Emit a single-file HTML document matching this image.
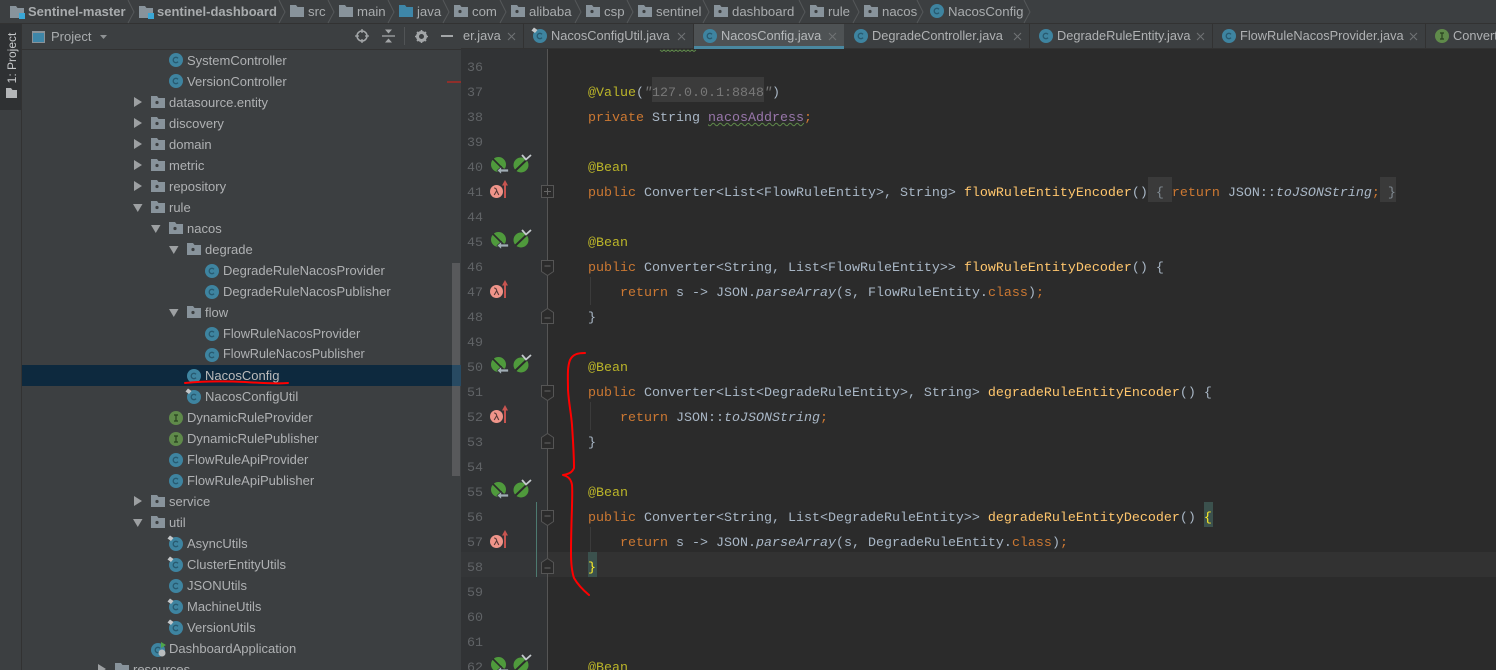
<!DOCTYPE html>
<html><head><meta charset="utf-8"><style>
html,body{margin:0;padding:0;background:#3c3f41}
#p{position:relative;width:1496px;height:670px;overflow:hidden;background:#3c3f41;font-family:"Liberation Sans",sans-serif;font-size:13px;color:#bbb}
#p div,#p span.a,#p svg.i{position:absolute}
.t{white-space:nowrap;line-height:21px;height:21px;color:#afb1b3}
.b{white-space:nowrap;line-height:23px;height:23px;top:0;color:#a9acae;font-size:13.2px}
.tb{white-space:nowrap;line-height:24px;height:24px;top:24px;color:#afb1b3;font-size:12.8px}
.sep{top:24px;width:1px;height:24px;background:#323232}
.l{left:588px;height:25px;line-height:25px;white-space:pre;font-family:"Liberation Mono",monospace;font-size:13.33px;color:#a9b7c6}
.n{left:467px;height:25px;line-height:25px;font-family:"Liberation Mono",monospace;font-size:13.33px;color:#606366}
.k{color:#cc7832}.y{color:#bbb529}.f{color:#ffc66d}.o{color:#9876aa}.it{font-style:italic}
.g{color:#787878}
svg.i{overflow:visible}
</style></head><body><div id="p">
<svg width="0" height="0" style="position:absolute">
<defs>
<g id="c"><circle cx="7" cy="7" r="7" fill="#3e84a0"/><path d="M9 5.300A2.700 2.700 0 1 0 9 8.700" fill="none" stroke="#285a70" stroke-width="1.300"/></g>
<g id="cp"><use href="#c"/><path d="M-1.500 1.500L1-1.500 4.500 1 2 4z" fill="#c4c7c9"/></g>
<g id="ii"><circle cx="7" cy="7" r="7" fill="#5f8a4a"/><path d="M5 4h4M7 4v6M5 10h4" stroke="#28401f" stroke-width="1.200" fill="none"/></g>
<g id="pk"><path d="M0 0h6l1.500 2H14v10H0z" fill="#88939b"/><circle cx="6" cy="6.500" r="1.600" fill="#3c3f41"/></g>
<g id="fo"><path d="M0 0h6l1.500 2H14v10H0z" fill="#88939b"/></g>
<g id="fb"><path d="M0 0h6l1.500 2H14v10H0z" fill="#3e86a8"/></g>
<g id="mod"><path d="M0 0h6l1.500 2H14v10H0z" fill="#88939b"/><rect x="9" y="7" width="6" height="6" fill="#3aa7d6"/></g>
<path id="ar" d="M0 0L8 5L0 10z" fill="#9da0a2"/>
<path id="ad" d="M0 0H9.500L4.750 8z" fill="#9da0a2"/>
<g id="be"><circle cx="7.500" cy="7.500" r="7.500" fill="#4f9a3c"/><path d="M2 2L13 13" stroke="#2b2b2b" stroke-width="1.600"/><path d="M6 13.500L10.500 9.500V12H17.500V15H10.500V17.500z" fill="#a0adb5" stroke="#2f3133" stroke-width=".7"/></g>
<g id="bc"><circle cx="7" cy="8" r="7.500" fill="#4f9a3c"/><path d="M1.500 13.500L13 2.500" stroke="#2b2b2b" stroke-width="2"/><path d="M8-2L12 2.500L17-2" fill="none" stroke="#c3c8cc" stroke-width="1.800"/></g>
<g id="la"><circle cx="6.500" cy="6.500" r="6.500" fill="#f0958a"/><path d="M4 3C6 3 6.300 4 6.800 6L8.800 10M6.500 6L4.200 10" fill="none" stroke="#5a3a38" stroke-width="1.100"/><path d="M15 13V-1" stroke="#c75450" stroke-width="2"/><path d="M12 .5L15-5L18 .5z" fill="#c75450"/></g>
<g id="fp"><rect x=".5" y=".5" width="12" height="12" fill="#2b2b2b" stroke="#555"/><path d="M3 6.500h7M6.500 3v7" stroke="#666"/></g>
<g id="fo1"><path d="M.5.5h12v11l-6 4-6-4z" fill="#2b2b2b" stroke="#555"/><path d="M3.500 6h6" stroke="#666"/></g>
<g id="fc1"><path d="M.5 15.500h12v-11l-6-4-6 4z" fill="#2b2b2b" stroke="#555"/><path d="M3.500 10h6" stroke="#666"/></g>
<path id="xx" d="M0 0L7 7M7 0L0 7" fill="none" stroke="#6f7274" stroke-width="1.100"/>
</defs></svg>

<!-- top bar -->
<div style="left:0;top:0;width:1496px;height:23px;background:#3c3f41"></div>
<div style="left:0;top:23px;width:1496px;height:1px;background:#323232"></div>
<svg class="i" style="left:10px;top:6px" width="16" height="14"><use href="#mod"/></svg><div class="b" style="left:28px;font-weight:bold;font-size:13px">Sentinel-master</div>
<svg class="i" style="left:139px;top:6px" width="16" height="14"><use href="#mod"/></svg><div class="b" style="left:157px;font-weight:bold;font-size:13px">sentinel-dashboard</div>
<svg class="i" style="left:290px;top:5px" width="14" height="12"><use href="#fo"/></svg><div class="b" style="left:308px">src</div>
<svg class="i" style="left:339px;top:5px" width="14" height="12"><use href="#fo"/></svg><div class="b" style="left:357px">main</div>
<svg class="i" style="left:399px;top:5px" width="14" height="12"><use href="#fb"/></svg><div class="b" style="left:417px">java</div>
<svg class="i" style="left:454px;top:5px" width="14" height="12"><use href="#pk"/></svg><div class="b" style="left:472px">com</div>
<svg class="i" style="left:511px;top:5px" width="14" height="12"><use href="#pk"/></svg><div class="b" style="left:529px">alibaba</div>
<svg class="i" style="left:586px;top:5px" width="14" height="12"><use href="#pk"/></svg><div class="b" style="left:604px">csp</div>
<svg class="i" style="left:638px;top:5px" width="14" height="12"><use href="#pk"/></svg><div class="b" style="left:656px">sentinel</div>
<svg class="i" style="left:714px;top:5px" width="14" height="12"><use href="#pk"/></svg><div class="b" style="left:732px">dashboard</div>
<svg class="i" style="left:810px;top:5px" width="14" height="12"><use href="#pk"/></svg><div class="b" style="left:828px">rule</div>
<svg class="i" style="left:864px;top:5px" width="14" height="12"><use href="#pk"/></svg><div class="b" style="left:882px">nacos</div>
<svg class="i" style="left:930px;top:4px" width="14" height="14"><use href="#c"/></svg><div class="b" style="left:948px">NacosConfig</div>
<svg class="i" style="left:0;top:0" width="1040" height="24"><g fill="none" stroke="#55585a"><path d="M128 0l6 12-6 11M279 0l6 12-6 11M328 0l6 12-6 11M388 0l6 12-6 11M443 0l6 12-6 11M500 0l6 12-6 11M575 0l6 12-6 11M627 0l6 12-6 11M703 0l6 12-6 11M799 0l6 12-6 11M853 0l6 12-6 11M917 0l6 12-6 11M1024 0l6 12-6 11"/></g></svg>

<!-- left strip -->
<div style="left:0;top:24px;width:21px;height:86px;background:#2f3133"></div>
<div style="left:21px;top:24px;width:1px;height:646px;background:#323232"></div>
<div style="left:-23px;top:49px;width:70px;height:18px;line-height:18px;font-size:12px;color:#c5c7c9;white-space:nowrap;transform:rotate(-90deg);text-align:center">1: Project</div>
<svg class="i" style="left:6px;top:88px" width="11" height="10"><path d="M0 0h5l1.500 2H11v8H0z" fill="#b4b6b8"/></svg>

<!-- project header -->
<div style="left:22px;top:49px;width:439px;height:1px;background:#323232"></div>
<div style="left:32px;top:31px;width:11px;height:9px;border:1.500px solid #8a9298;background:#3e86a8;border-top-width:2.500px"></div>
<div class="t" style="left:51px;top:26px;color:#a9acae">Project</div>
<svg class="i" style="left:100px;top:35px" width="8" height="5"><path d="M0 0h7L3.500 4z" fill="#8f9294"/></svg>
<svg class="i" style="left:355px;top:29px" width="14" height="14"><circle cx="7" cy="7" r="5" fill="none" stroke="#a3a6a8" stroke-width="1.500"/><path d="M7 0v4M7 10v4M0 7h4M10 7h4" stroke="#a3a6a8" stroke-width="1.300"/></svg>
<svg class="i" style="left:382px;top:29px" width="14" height="14"><path d="M0 7h13" stroke="#a3a6a8" stroke-width="1.300"/><path d="M3 0.500h7L6.500 4.500zM3 13.500h7L6.500 9.500z" fill="#a3a6a8"/></svg>
<div style="left:404px;top:27px;width:1px;height:18px;background:#515456"></div>
<svg class="i" style="left:415px;top:30px" width="13" height="13"><circle cx="6.500" cy="6.500" r="4" fill="none" stroke="#a3a6a8" stroke-width="3"/><path d="M6.500 0v13M0 6.500h13M2 2l9 9M11 2l-9 9" stroke="#a3a6a8" stroke-width="1.600" stroke-dasharray="2 9"/></svg>
<div style="left:441px;top:35px;width:12px;height:2px;background:#a3a6a8"></div>

<!-- selected row -->
<div style="left:22px;top:365px;width:439px;height:21px;background:#0d293e"></div>

<!-- tree -->
<svg class="i" style="left:169px;top:53px" width="14" height="14"><use href="#c"/></svg><div class="t" style="left:187px;top:50px">SystemController</div>
<svg class="i" style="left:169px;top:74px" width="14" height="14"><use href="#c"/></svg><div class="t" style="left:187px;top:71px">VersionController</div>
<svg class="i" style="left:134px;top:97px" width="9" height="10"><use href="#ar"/></svg><svg class="i" style="left:151px;top:96px" width="14" height="12"><use href="#pk"/></svg><div class="t" style="left:169px;top:92px">datasource.entity</div>
<svg class="i" style="left:134px;top:118px" width="9" height="10"><use href="#ar"/></svg><svg class="i" style="left:151px;top:117px" width="14" height="12"><use href="#pk"/></svg><div class="t" style="left:169px;top:113px">discovery</div>
<svg class="i" style="left:134px;top:139px" width="9" height="10"><use href="#ar"/></svg><svg class="i" style="left:151px;top:138px" width="14" height="12"><use href="#pk"/></svg><div class="t" style="left:169px;top:134px">domain</div>
<svg class="i" style="left:134px;top:160px" width="9" height="10"><use href="#ar"/></svg><svg class="i" style="left:151px;top:159px" width="14" height="12"><use href="#pk"/></svg><div class="t" style="left:169px;top:155px">metric</div>
<svg class="i" style="left:134px;top:181px" width="9" height="10"><use href="#ar"/></svg><svg class="i" style="left:151px;top:180px" width="14" height="12"><use href="#pk"/></svg><div class="t" style="left:169px;top:176px">repository</div>
<svg class="i" style="left:133px;top:204px" width="10" height="8"><use href="#ad"/></svg><svg class="i" style="left:151px;top:201px" width="14" height="12"><use href="#pk"/></svg><div class="t" style="left:169px;top:197px">rule</div>
<svg class="i" style="left:151px;top:225px" width="10" height="8"><use href="#ad"/></svg><svg class="i" style="left:169px;top:222px" width="14" height="12"><use href="#pk"/></svg><div class="t" style="left:187px;top:218px">nacos</div>
<svg class="i" style="left:169px;top:246px" width="10" height="8"><use href="#ad"/></svg><svg class="i" style="left:187px;top:243px" width="14" height="12"><use href="#pk"/></svg><div class="t" style="left:205px;top:239px">degrade</div>
<svg class="i" style="left:205px;top:264px" width="14" height="14"><use href="#c"/></svg><div class="t" style="left:223px;top:260px">DegradeRuleNacosProvider</div>
<svg class="i" style="left:205px;top:285px" width="14" height="14"><use href="#c"/></svg><div class="t" style="left:223px;top:281px">DegradeRuleNacosPublisher</div>
<svg class="i" style="left:169px;top:309px" width="10" height="8"><use href="#ad"/></svg><svg class="i" style="left:187px;top:306px" width="14" height="12"><use href="#pk"/></svg><div class="t" style="left:205px;top:302px">flow</div>
<svg class="i" style="left:205px;top:327px" width="14" height="14"><use href="#c"/></svg><div class="t" style="left:223px;top:323px;font-size:12.8px">FlowRuleNacosProvider</div>
<svg class="i" style="left:205px;top:348px" width="14" height="14"><use href="#c"/></svg><div class="t" style="left:223px;top:344px;font-size:12.7px">FlowRuleNacosPublisher</div>
<svg class="i" style="left:187px;top:369px" width="14" height="14"><use href="#c"/></svg><div class="t" style="left:205px;top:365px;color:#bbb">NacosConfig</div>
<svg class="i" style="left:187px;top:390px" width="14" height="14"><use href="#cp"/></svg><div class="t" style="left:205px;top:386px">NacosConfigUtil</div>
<svg class="i" style="left:169px;top:411px" width="14" height="14"><use href="#ii"/></svg><div class="t" style="left:187px;top:407px">DynamicRuleProvider</div>
<svg class="i" style="left:169px;top:432px" width="14" height="14"><use href="#ii"/></svg><div class="t" style="left:187px;top:428px">DynamicRulePublisher</div>
<svg class="i" style="left:169px;top:453px" width="14" height="14"><use href="#c"/></svg><div class="t" style="left:187px;top:449px">FlowRuleApiProvider</div>
<svg class="i" style="left:169px;top:474px" width="14" height="14"><use href="#c"/></svg><div class="t" style="left:187px;top:470px">FlowRuleApiPublisher</div>
<svg class="i" style="left:134px;top:496px" width="9" height="10"><use href="#ar"/></svg><svg class="i" style="left:151px;top:495px" width="14" height="12"><use href="#pk"/></svg><div class="t" style="left:169px;top:491px">service</div>
<svg class="i" style="left:133px;top:519px" width="10" height="8"><use href="#ad"/></svg><svg class="i" style="left:151px;top:516px" width="14" height="12"><use href="#pk"/></svg><div class="t" style="left:169px;top:512px">util</div>
<svg class="i" style="left:169px;top:537px" width="14" height="14"><use href="#cp"/></svg><div class="t" style="left:187px;top:533px">AsyncUtils</div>
<svg class="i" style="left:169px;top:558px" width="14" height="14"><use href="#cp"/></svg><div class="t" style="left:187px;top:554px">ClusterEntityUtils</div>
<svg class="i" style="left:169px;top:579px" width="14" height="14"><use href="#c"/></svg><div class="t" style="left:187px;top:575px">JSONUtils</div>
<svg class="i" style="left:169px;top:600px" width="14" height="14"><use href="#cp"/></svg><div class="t" style="left:187px;top:596px">MachineUtils</div>
<svg class="i" style="left:169px;top:621px" width="14" height="14"><use href="#cp"/></svg><div class="t" style="left:187px;top:617px">VersionUtils</div>
<svg class="i" style="left:151px;top:643px" width="14" height="14"><use href="#c"/><circle cx="11" cy="10" r="3.500" fill="#b9bcbe"/><path d="M10-1V5L15 2z" fill="#4fa64a"/></svg><div class="t" style="left:169px;top:638px">DashboardApplication</div>
<svg class="i" style="left:98px;top:664px" width="9" height="10"><use href="#ar"/></svg><svg class="i" style="left:115px;top:663px" width="14" height="12"><use href="#fo"/></svg><div class="t" style="left:133px;top:659px">resources</div>

<!-- sidebar scrollbar -->
<div style="left:452px;top:263px;width:8px;height:213px;background:#58595b"></div>
<div style="left:452px;top:365px;width:9px;height:21px;background:#284a62"></div>
<div style="left:447px;top:81px;width:14px;height:2px;background:#8f2f2b"></div>

<!-- tabs -->
<div style="left:461px;top:24px;width:1035px;height:24px;background:#3c3f41"></div>
<div style="left:461px;top:48px;width:1035px;height:1px;background:#323232"></div>
<div class="tb" style="left:463px">er.java</div><svg class="i" style="left:508px;top:33px" width="7" height="7"><use href="#xx"/></svg><div class="sep" style="left:523px"></div>
<svg class="i" style="left:533px;top:29px" width="14" height="14"><use href="#cp"/></svg><div class="tb" style="left:551px">NacosConfigUtil.java</div><svg class="i" style="left:678px;top:33px" width="7" height="7"><use href="#xx"/></svg><div class="sep" style="left:693px"></div>
<div style="left:694px;top:24px;width:150px;height:25px;background:#4e5254"></div><div style="left:694px;top:46px;width:150px;height:3px;background:#4a88a0"></div>
<svg class="i" style="left:703px;top:29px" width="14" height="14"><use href="#c"/></svg><div class="tb" style="left:721px;color:#b5b8ba">NacosConfig.java</div><svg class="i" style="left:829px;top:33px" width="7" height="7"><use href="#xx"/></svg>
<svg class="i" style="left:854px;top:29px" width="14" height="14"><use href="#c"/></svg><div class="tb" style="left:872px">DegradeController.java</div><svg class="i" style="left:1014px;top:33px" width="7" height="7"><use href="#xx"/></svg><div class="sep" style="left:1029px"></div>
<svg class="i" style="left:1039px;top:29px" width="14" height="14"><use href="#c"/></svg><div class="tb" style="left:1057px">DegradeRuleEntity.java</div><svg class="i" style="left:1197px;top:33px" width="7" height="7"><use href="#xx"/></svg><div class="sep" style="left:1212px"></div>
<svg class="i" style="left:1222px;top:29px" width="14" height="14"><use href="#c"/></svg><div class="tb" style="left:1240px">FlowRuleNacosProvider.java</div><svg class="i" style="left:1410px;top:33px" width="7" height="7"><use href="#xx"/></svg><div class="sep" style="left:1425px"></div>
<svg class="i" style="left:1435px;top:29px" width="14" height="14"><use href="#ii"/></svg><div class="tb" style="left:1453px">Converter.java</div>

<!-- editor -->
<div style="left:461px;top:49px;width:87px;height:621px;background:#313335"></div>
<div style="left:548px;top:49px;width:948px;height:621px;background:#2b2b2b"></div>
<div style="left:461px;top:552px;width:87px;height:25px;background:#343638"></div>
<div style="left:548px;top:552px;width:948px;height:25px;background:#323232"></div>
<div style="left:547px;top:49px;width:1px;height:621px;background:#555"></div>
<div style="left:536px;top:502px;width:1px;height:75px;background:#4d7a70"></div>

<!-- highlights -->
<div style="left:652px;top:77px;width:112px;height:25px;background:#3b3b3b"></div>
<div style="left:1148px;top:177px;width:24px;height:25px;background:#3a3a3a"></div>
<div style="left:1380px;top:177px;width:16px;height:25px;background:#3a3a3a"></div>
<div style="left:1204px;top:502px;width:9px;height:25px;background:#3b514d"></div>
<div style="left:588px;top:552px;width:9px;height:25px;background:#3b514d"></div>
<div style="left:590px;top:277px;width:1px;height:28px;background:#3b3b3b"></div>
<div style="left:590px;top:402px;width:1px;height:28px;background:#3b3b3b"></div>
<div style="left:590px;top:527px;width:1px;height:25px;background:#3b3b3b"></div>

<!-- numbers -->
<div class="n" style="top:56px">36</div><div class="n" style="top:81px">37</div><div class="n" style="top:106px">38</div><div class="n" style="top:131px">39</div><div class="n" style="top:156px">40</div><div class="n" style="top:181px">41</div><div class="n" style="top:206px">44</div><div class="n" style="top:231px">45</div><div class="n" style="top:256px">46</div><div class="n" style="top:281px">47</div><div class="n" style="top:306px">48</div><div class="n" style="top:331px">49</div><div class="n" style="top:356px">50</div><div class="n" style="top:381px">51</div><div class="n" style="top:406px">52</div><div class="n" style="top:431px">53</div><div class="n" style="top:456px">54</div><div class="n" style="top:481px">55</div><div class="n" style="top:506px">56</div><div class="n" style="top:531px">57</div><div class="n" style="top:556px">58</div><div class="n" style="top:581px">59</div><div class="n" style="top:606px">60</div><div class="n" style="top:631px">61</div><div class="n" style="top:656px">62</div>

<!-- code -->
<div class="l" style="top:81px"><span class="y">@Value</span>(<span class="g it">"</span><span class="g">127.0.0.1:8848</span><span class="g it">"</span>)</div>
<div class="l" style="top:106px"><span class="k">private</span> String <span class="o" style="text-decoration:underline wavy #5f8a4a 1px;text-underline-offset:1px">nacosAddress</span><span class="k">;</span></div>
<div class="l" style="top:156px"><span class="y">@Bean</span></div>
<div class="l" style="top:181px"><span class="k">public</span> Converter&lt;List&lt;FlowRuleEntity&gt;, String&gt; <span class="f">flowRuleEntityEncoder</span>() <span style="color:#808a92">{</span> <span class="k">return</span> JSON::<span class="it">toJSONString</span><span class="k">;</span> <span style="color:#808a92">}</span></div>
<div class="l" style="top:231px"><span class="y">@Bean</span></div>
<div class="l" style="top:256px"><span class="k">public</span> Converter&lt;String, List&lt;FlowRuleEntity&gt;&gt; <span class="f">flowRuleEntityDecoder</span>() {</div>
<div class="l" style="top:281px">    <span class="k">return</span> s -&gt; JSON.<span class="it">parseArray</span>(s, FlowRuleEntity.<span class="k">class</span>)<span class="k">;</span></div>
<div class="l" style="top:306px">}</div>
<div class="l" style="top:356px"><span class="y">@Bean</span></div>
<div class="l" style="top:381px"><span class="k">public</span> Converter&lt;List&lt;DegradeRuleEntity&gt;, String&gt; <span class="f">degradeRuleEntityEncoder</span>() {</div>
<div class="l" style="top:406px">    <span class="k">return</span> JSON::<span class="it">toJSONString</span><span class="k">;</span></div>
<div class="l" style="top:431px">}</div>
<div class="l" style="top:481px"><span class="y">@Bean</span></div>
<div class="l" style="top:506px"><span class="k">public</span> Converter&lt;String, List&lt;DegradeRuleEntity&gt;&gt; <span class="f">degradeRuleEntityDecoder</span>() <span style="color:#ffef28">{</span></div>
<div class="l" style="top:531px">    <span class="k">return</span> s -&gt; JSON.<span class="it">parseArray</span>(s, DegradeRuleEntity.<span class="k">class</span>)<span class="k">;</span></div>
<div class="l" style="top:556px"><span style="color:#ffef28">}</span></div>
<div class="l" style="top:656px"><span class="y">@Bean</span></div>

<!-- wavy top -->
<svg class="i" style="left:660px;top:49px" width="40" height="3"><path d="M0 1l2 1.500 2-1.500 2 1.500 2-1.500 2 1.500 2-1.500 2 1.500 2-1.500 2 1.500 2-1.500 2 1.500 2-1.500 2 1.500 2-1.500 2 1.500 2-1.500 2 1.500 2-1.500" fill="none" stroke="#5f8a4a"/></svg>

<!-- gutter icons -->
<svg class="i" style="left:491px;top:157px" width="17" height="17"><use href="#be"/></svg><svg class="i" style="left:514px;top:157px" width="17" height="17"><use href="#bc"/></svg>
<svg class="i" style="left:490px;top:185px" width="19" height="14"><use href="#la"/></svg>
<svg class="i" style="left:491px;top:232px" width="17" height="17"><use href="#be"/></svg><svg class="i" style="left:514px;top:232px" width="17" height="17"><use href="#bc"/></svg>
<svg class="i" style="left:490px;top:285px" width="19" height="14"><use href="#la"/></svg>
<svg class="i" style="left:491px;top:357px" width="17" height="17"><use href="#be"/></svg><svg class="i" style="left:514px;top:357px" width="17" height="17"><use href="#bc"/></svg>
<svg class="i" style="left:490px;top:410px" width="19" height="14"><use href="#la"/></svg>
<svg class="i" style="left:491px;top:482px" width="17" height="17"><use href="#be"/></svg><svg class="i" style="left:514px;top:482px" width="17" height="17"><use href="#bc"/></svg>
<svg class="i" style="left:490px;top:535px" width="19" height="14"><use href="#la"/></svg>
<svg class="i" style="left:491px;top:657px" width="17" height="17"><use href="#be"/></svg><svg class="i" style="left:514px;top:657px" width="17" height="17"><use href="#bc"/></svg>

<!-- fold markers -->
<svg class="i" style="left:541px;top:185px" width="13" height="13"><use href="#fp"/></svg>
<svg class="i" style="left:541px;top:260px" width="13" height="16"><use href="#fo1"/></svg>
<svg class="i" style="left:541px;top:308px" width="13" height="16"><use href="#fc1"/></svg>
<svg class="i" style="left:541px;top:385px" width="13" height="16"><use href="#fo1"/></svg>
<svg class="i" style="left:541px;top:433px" width="13" height="16"><use href="#fc1"/></svg>
<svg class="i" style="left:541px;top:510px" width="13" height="16"><use href="#fo1"/></svg>
<svg class="i" style="left:541px;top:558px" width="13" height="16"><use href="#fc1"/></svg>

<!-- red annotations -->
<svg class="i" style="left:0;top:0" width="1496" height="670"><g fill="none" stroke="#f00" stroke-width="2" stroke-linecap="round" stroke-linejoin="round"><path d="M585 353C578 353 573 354 570 360C567 368 568 378 568 390C569 405 571 412 572 425C573 440 574 455 574 468C572 473 568 474 563 475C567 476 571 478 572 485C573 495 571 520 571 553C571 565 572 572 574 578C578 585 583 590 589 595"/><path d="M185 383C205 381 225 381 245 382C260 383 275 384 288 383"/></g></svg>
</div></body></html>
